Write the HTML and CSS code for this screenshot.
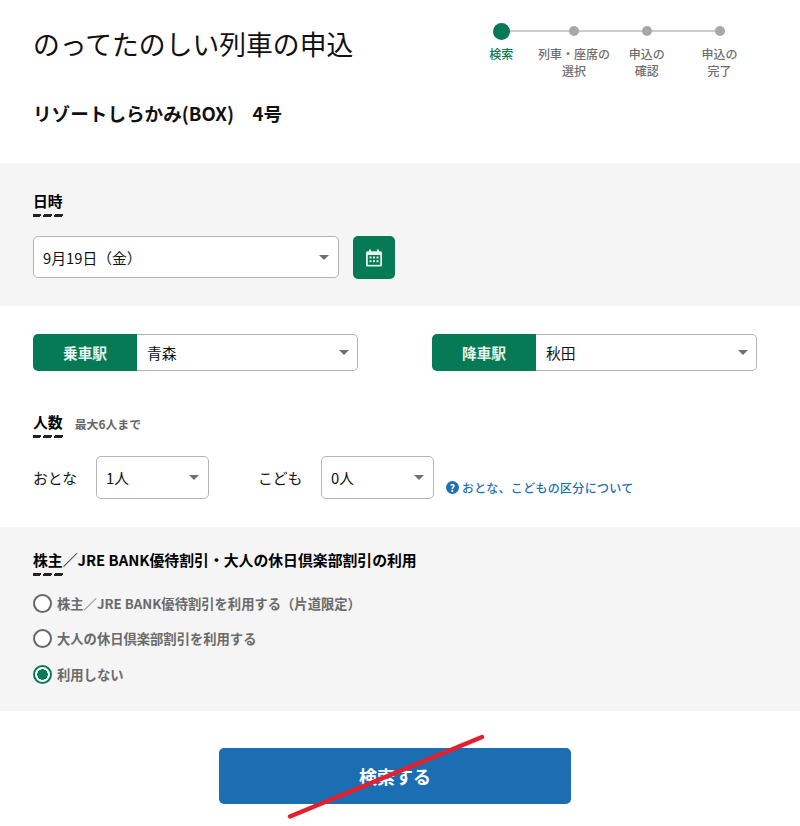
FILE: index.html
```html
<!DOCTYPE html>
<html lang="ja">
<head>
<meta charset="utf-8">
<title>のってたのしい列車の申込</title>
<link rel="stylesheet" href="styles.css">
</head>
<body>
<div class="page">
  <header class="head">
    <div class="head-text">
      <h1 class="title">のってたのしい列車の申込</h1>
      <p class="train">リゾートしらかみ(BOX)　4号</p>
    </div>
    <ol class="steps">
      <li class="step step-on"><span class="dot"></span><span class="step-label">検索</span></li>
      <li class="step"><span class="dot"></span><span class="step-label">列車・座席の<br>選択</span></li>
      <li class="step"><span class="dot"></span><span class="step-label">申込の<br>確認</span></li>
      <li class="step"><span class="dot"></span><span class="step-label">申込の<br>完了</span></li>
    </ol>
  </header>

  <section class="band band-date">
    <h2 class="heading">日時</h2>
    <div class="date-row">
      <div class="select select-date"><span>9月19日（金）</span><i class="caret"></i></div>
      <button class="cal-btn" type="button" aria-label="カレンダー">
        <svg width="18" height="18" viewBox="0 0 18 18"><path fill="#e4f3ec" d="M4 0.5h2v1.7h6V0.5h2v1.7h1.5A1.5 1.5 0 0 1 17 3.7v12.3a1.5 1.5 0 0 1-1.5 1.5h-13A1.5 1.5 0 0 1 1 16V3.700A1.5 1.500 0 0 1 2.500 2.200H4z"/><rect x="2.800" y="6" width="12.400" height="9.800" fill="#067a54"/><g fill="#e4f3ec"><rect x="4.500" y="7.500" width="2" height="2"/><rect x="8" y="7.500" width="2" height="2"/><rect x="11.500" y="7.500" width="2" height="2"/><rect x="4.500" y="11.200" width="2" height="2"/><rect x="8" y="11.200" width="2" height="2"/><rect x="11.500" y="11.200" width="2" height="2"/></g></svg>
      </button>
    </div>
  </section>

  <section class="band-plain">
    <div class="stations">
      <div class="station"><span class="station-tag">乗車駅</span><div class="station-select"><span>青森</span><i class="caret"></i></div></div>
      <div class="station"><span class="station-tag">降車駅</span><div class="station-select"><span>秋田</span><i class="caret"></i></div></div>
    </div>
    <div class="people-head">
      <h2 class="heading">人数</h2>
      <span class="note">最大6人まで</span>
    </div>
    <div class="people-row">
      <span class="people-label">おとな</span>
      <div class="select select-num"><span>1人</span><i class="caret"></i></div>
      <span class="people-label people-child">こども</span>
      <div class="select select-num"><span>0人</span><i class="caret"></i></div>
      <a class="help" href="#"><span class="help-icon">?</span>おとな、こどもの区分について</a>
    </div>
  </section>

  <section class="band band-discount">
    <h2 class="heading">株主／JRE BANK優待割引・大人の休日倶楽部割引の利用</h2>
    <div class="radios">
      <div class="radio"><span class="radio-mark"></span>株主／JRE BANK優待割引を利用する（片道限定）</div>
      <div class="radio"><span class="radio-mark"></span>大人の休日倶楽部割引を利用する</div>
      <div class="radio"><span class="radio-mark radio-on"></span>利用しない</div>
    </div>
  </section>

  <div class="submit-wrap">
    <button class="submit" type="button">検索する</button>
  </div>

  <svg class="slash" width="800" height="826" viewBox="0 0 800 826"><line x1="290" y1="816.500" x2="482" y2="737" stroke="#e2202e" stroke-width="4.500" stroke-linecap="round"/></svg>
</div>
</body>
</html>
```
FILE: styles.css
```css
* { box-sizing: border-box; }
html, body { margin: 0; padding: 0; }
body {
  background: #fff;
  color: #111;
  font-family: "Noto Sans CJK JP", "Noto Sans", sans-serif;
}
.page { position: relative; width: 800px; height: 826px; overflow: hidden; }

.head { display: flex; justify-content: space-between; height: 163px; padding: 0 44px 0 33px; }
.head-text { padding-top: 24px; }
.title { margin: 0; font-size: 26.800px; line-height: 40px; font-weight: 400; }
.train { margin: 35px 0 0; font-size: 18.600px; line-height: 28px; font-weight: 700; }

.steps { display: flex; list-style: none; margin: 0; padding: 23px 0 0; width: 291px; }
.step { position: relative; flex: 1; display: flex; flex-direction: column; align-items: center; color: #6f6f6f; }
.step::before { content: ""; position: absolute; top: 7px; left: 50%; width: 100%; height: 2px; background: #ccc; }
.step:last-child::before { display: none; }
.dot { position: relative; width: 10px; height: 10px; margin-top: 3px; margin-bottom: 9px; border-radius: 50%; background: #a8a8a8; }
.step-on { color: #067a54; }
.step-on .dot { width: 17px; height: 17px; margin-top: 0; margin-bottom: 5px; background: #067a54; }
.step-label { font-size: 12px; line-height: 17px; text-align: center; font-weight: 500; white-space: nowrap; }

.band { background: #f5f5f5; padding-left: 33px; }
.band-date { height: 143px; padding-top: 25px; }
.heading {
  display: inline-block;
  margin: 0;
  padding-bottom: 6px;
  font-size: 14.850px;
  line-height: 21px;
  font-weight: 700;
  position: relative;
  color: #000;
}
.heading::after {
  content: "";
  position: absolute;
  left: 0;
  bottom: 0;
  width: 30px;
  height: 3px;
  background: repeating-linear-gradient(115deg, #222 0 7.500px, transparent 7.500px 10px);
}
.date-row { display: flex; gap: 14px; margin-top: 19px; }
.select {
  display: flex;
  align-items: center;
  justify-content: space-between;
  background: #fff;
  border: 1px solid #b4b4b4;
  border-radius: 5px;
  font-size: 14.800px;
  padding: 0 9px;
}
.select-date { width: 306px; height: 42px; }
.caret { width: 0; height: 0; border-left: 5.500px solid transparent; border-right: 5.500px solid transparent; border-top: 5px solid #707070; }
.cal-btn { display: flex; align-items: center; justify-content: center; width: 42px; height: 43px; padding: 0; border: 0; border-radius: 5px; background: #067a54; }

.band-plain { height: 221px; padding: 28px 43px 0 33px; }
.stations { display: flex; justify-content: space-between; }
.station { display: flex; width: 325px; height: 37px; }
.station-tag { display: flex; align-items: center; justify-content: center; width: 104px; border-radius: 5px 0 0 5px; background: #067a54; color: #e8f5ef; font-size: 14.700px; font-weight: 700; }
.station-select { flex: 1; display: flex; align-items: center; justify-content: space-between; padding: 0 8px 0 10px; border: 1px solid #b4b4b4; border-left: 0; border-radius: 0 5px 5px 0; font-size: 14.800px; }
.people-head { display: flex; align-items: flex-start; gap: 12px; margin-top: 40px; }
.note { margin-top: 2px; font-size: 11.900px; line-height: 21px; font-weight: 700; color: #666; }
.people-row { display: flex; align-items: center; margin-top: 18px; height: 43px; }
.people-label { font-size: 14.800px; width: 63px; }
.people-child { width: 63px; margin-left: 49px; margin-left: 49px; }
.select-num { width: 113px; height: 43px; }
.help { display: flex; align-items: center; margin: 20px 0 0 12px; color: #1f70b0; font-size: 12px; font-weight: 500; letter-spacing: 0.3px; text-decoration: none; }
.help-icon { display: flex; align-items: center; justify-content: center; width: 13px; height: 13px; margin-right: 3px; border-radius: 50%; background: #1f70b0; color: #fff; font-size: 10px; font-weight: 700; }

.band-discount { height: 184px; padding-top: 20px; }
.radios { display: flex; flex-direction: column; gap: 15.500px; margin-top: 17px; }
.radio { display: flex; align-items: center; gap: 5px; height: 20px; font-size: 13.300px; font-weight: 700; color: #6a6a6a; }
.radio-mark { width: 19px; height: 19px; border-radius: 50%; border: 2px solid #666; background: #fff; }
.radio-on { border-color: #067a54; background: radial-gradient(circle, #067a54 0 5px, #fff 5.500px); }

.submit-wrap { display: flex; justify-content: center; padding: 37px 10px 0 0; }
.submit { width: 352px; height: 56px; border: 0; border-radius: 5px; background: #1c6eb2; color: #fff; font-family: inherit; font-size: 18px; font-weight: 700; }
.slash { position: absolute; left: 0; top: 0; pointer-events: none; }
```
